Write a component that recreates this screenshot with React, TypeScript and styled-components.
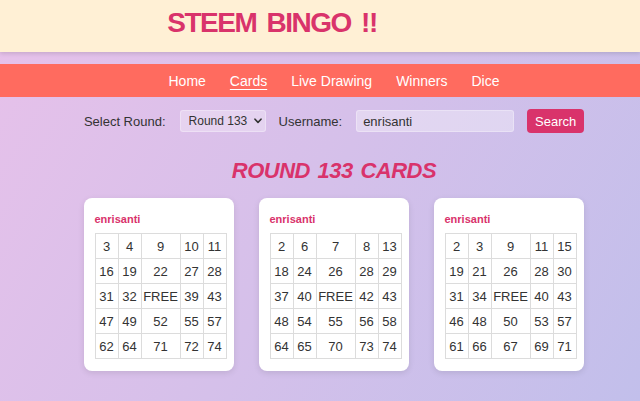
import React from 'react';
import styled, { createGlobalStyle } from 'styled-components';

const GlobalStyle = createGlobalStyle`
  html, body {
    margin: 0;
    padding: 0;
  }
  body {
    font-family: 'Comic Sans MS', 'Liberation Sans', sans-serif;
    background: linear-gradient(120deg, #e7c1ea 0%, #d5c0ea 50%, #c2bfeb 100%);
    min-height: 100vh;
  }
`;

const Page = styled.div`
  min-height: 401px;
`;

const Header = styled.header`
  height: 52px;
  background: #fff0d5;
  box-shadow: 0 2px 4px rgba(0, 0, 0, 0.12);
  display: flex;
  justify-content: center;
  align-items: center;
  padding-right: 96px;
`;

const Title = styled.h1`
  margin: 0 0 7px;
  font-size: 28px;
  font-weight: bold;
  color: #d9336b;
  letter-spacing: -1.5px;
  word-spacing: 4px;
`;

const Nav = styled.nav`
  margin-top: 12px;
  height: 33px;
  background: #ff6b5f;
  display: flex;
  justify-content: center;
  align-items: center;
  gap: 24px;
  padding-left: 28px;
`;

const NavLink = styled.a<{ $active?: boolean }>`
  color: #ffffff;
  font-size: 14px;
  text-decoration: ${(p) => (p.$active ? 'underline' : 'none')};
  text-underline-offset: 3px;
  cursor: pointer;
`;

const Controls = styled.div`
  margin-top: 12px;
  display: flex;
  justify-content: center;
  align-items: center;
  padding-left: 28px;
`;

const Label = styled.label`
  font-size: 13px;
  color: #333;
  margin-right: 14px;
`;

const SelectWrap = styled.div`
  position: relative;
  margin-right: 13px;
`;

const Select = styled.select`
  appearance: none;
  width: 86px;
  height: 22px;
  border: 1px solid rgba(255, 255, 255, 0.3);
  border-radius: 3px;
  background: rgba(255, 255, 255, 0.3);
  font-family: 'Liberation Sans', Arial, sans-serif;
  font-size: 12px;
  color: #333;
  padding: 0 0 0 8px;
  display: block;
`;

const Chevron = styled.svg`
  position: absolute;
  right: 4px;
  top: 8px;
  width: 8px;
  height: 6px;
  pointer-events: none;
`;

const Input = styled.input`
  width: 158px;
  height: 22px;
  box-sizing: border-box;
  border: 1px solid rgba(255, 255, 255, 0.3);
  border-radius: 3px;
  background: rgba(255, 255, 255, 0.35);
  font-family: 'Liberation Sans', Arial, sans-serif;
  font-size: 13px;
  color: #333;
  padding: 0 6px;
  margin-right: 13px;
  outline: none;
`;

const Button = styled.button`
  width: 57px;
  height: 24px;
  border: none;
  border-radius: 4px;
  background: #d9336b;
  color: #fff;
  font-family: 'Liberation Sans', Arial, sans-serif;
  font-size: 13px;
  padding: 0;
`;

const Heading = styled.h2`
  margin: 25px 0 0;
  text-align: center;
  font-size: 22px;
  font-weight: bold;
  font-style: italic;
  color: #d9336b;
  letter-spacing: -0.5px;
  word-spacing: 2px;
  padding-left: 28px;
`;

const CardRow = styled.div`
  margin-top: 14px;
  display: flex;
  justify-content: center;
  gap: 25px;
  padding-left: 27px;
`;

const Card = styled.div`
  width: 150px;
  box-sizing: border-box;
  background: #fff;
  border-radius: 8px;
  box-shadow: 0 2px 6px rgba(0, 0, 0, 0.1);
  padding: 13px 9px 12px 11px;
`;

const Owner = styled.div`
  font-size: 11px;
  font-weight: bold;
  color: #d9336b;
  height: 16px;
  line-height: 16px;
  margin-bottom: 6px;
`;

const Grid = styled.table`
  border-collapse: collapse;
  table-layout: fixed;
  width: 130px;
`;

const Cell = styled.td<{ $wide?: boolean }>`
  width: ${(p) => (p.$wide ? '38px' : '22px')};
  height: 24px;
  padding: 0;
  border: 1px solid #dcdcdc;
  text-align: center;
  font-size: 13px;
  color: #333;
`;

const cards: (number | string)[][][] = [
  [
    [3, 4, 9, 10, 11],
    [16, 19, 22, 27, 28],
    [31, 32, 'FREE', 39, 43],
    [47, 49, 52, 55, 57],
    [62, 64, 71, 72, 74],
  ],
  [
    [2, 6, 7, 8, 13],
    [18, 24, 26, 28, 29],
    [37, 40, 'FREE', 42, 43],
    [48, 54, 55, 56, 58],
    [64, 65, 70, 73, 74],
  ],
  [
    [2, 3, 9, 11, 15],
    [19, 21, 26, 28, 30],
    [31, 34, 'FREE', 40, 43],
    [46, 48, 50, 53, 57],
    [61, 66, 67, 69, 71],
  ],
];

const App = () => {
  return (
    <Page>
      <GlobalStyle />
      <Header>
        <Title>STEEM BINGO !!</Title>
      </Header>
      <Nav>
        <NavLink>Home</NavLink>
        <NavLink $active>Cards</NavLink>
        <NavLink>Live Drawing</NavLink>
        <NavLink>Winners</NavLink>
        <NavLink>Dice</NavLink>
      </Nav>
      <Controls>
        <Label>Select Round:</Label>
        <SelectWrap>
          <Select defaultValue="133">
            <option value="133">Round 133</option>
          </Select>
          <Chevron viewBox="0 0 8 6">
            <path d="M1 1.2 L4 4.4 L7 1.2" fill="none" stroke="#333" strokeWidth="1.6" strokeLinecap="round" strokeLinejoin="round" />
          </Chevron>
        </SelectWrap>
        <Label>Username:</Label>
        <Input defaultValue="enrisanti" />
        <Button>Search</Button>
      </Controls>
      <Heading>ROUND 133 CARDS</Heading>
      <CardRow>
        {cards.map((card, i) => (
          <Card key={i}>
            <Owner>enrisanti</Owner>
            <Grid>
              <tbody>
                {card.map((row, r) => (
                  <tr key={r}>
                    {row.map((n, c) => (
                      <Cell key={c} $wide={c === 2}>
                        {n}
                      </Cell>
                    ))}
                  </tr>
                ))}
              </tbody>
            </Grid>
          </Card>
        ))}
      </CardRow>
    </Page>
  );
};

export default App;
